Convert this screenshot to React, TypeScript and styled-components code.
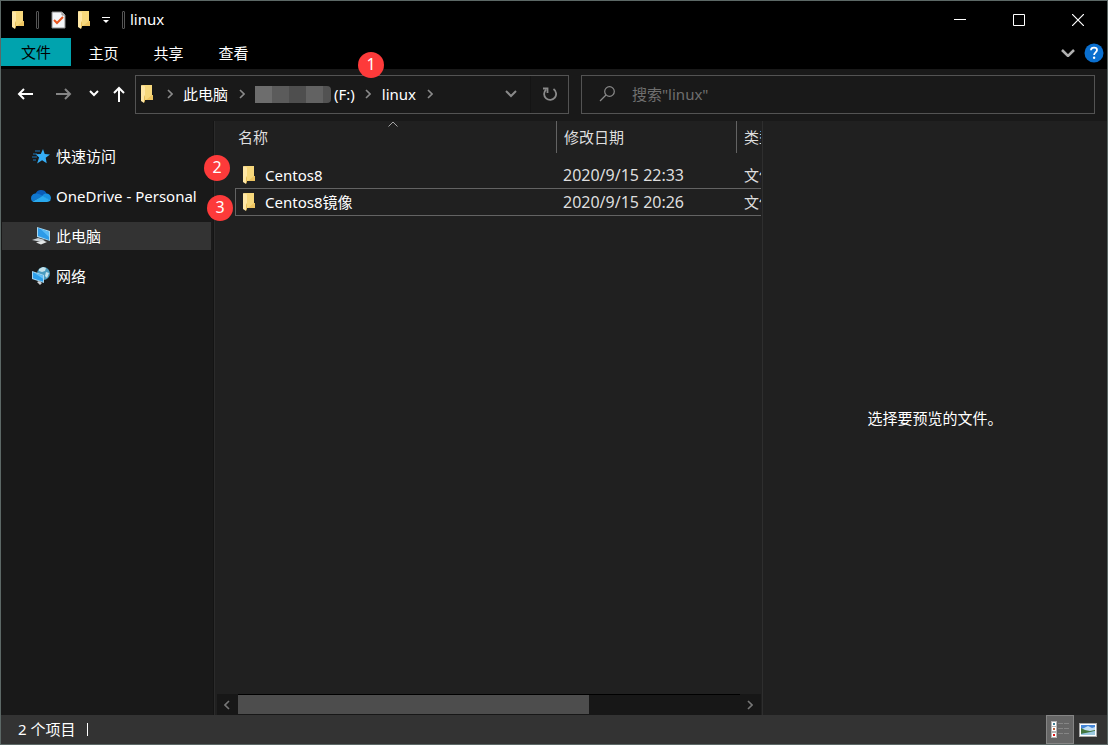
import React from "react";
import styled, { createGlobalStyle } from "styled-components";

const GlobalStyle = createGlobalStyle`
  *, *::before, *::after { box-sizing: border-box; }
  body { margin: 0; background: #000; }
  button, input { font: inherit; color: inherit; }
  body, button, input {
    font-family: "Noto Sans", "Noto Sans CJK SC", sans-serif;
    font-size: 15px;
    line-height: 20px;
  }
`;

const Window = styled.div`
  display: flex;
  flex-direction: column;
  min-height: 100vh;
  border: 1px solid #5c6866;
  background: #191919;
  color: #fff;
`;

const PlainButton = styled.button`
  display: flex;
  align-items: center;
  justify-content: center;
  flex: none;
  padding: 0;
  border: 0;
  background: none;
`;

const TitleBar = styled.header`
  display: flex;
  align-items: center;
  height: 37px;
  padding-left: 11px;
  background: #000;
`;

const QuickBar = styled.div`
  display: flex;
  align-items: center;
  gap: 12px;
`;

const Grip = styled.span`
  width: 3px;
  height: 18px;
  border: 1px solid #555;
  border-radius: 1px;
`;

const Title = styled.h1`
  flex: 1;
  margin: 0;
  padding: 0 0 2px 5px;
  font-size: 15px;
  font-weight: 400;
`;

const CaptionButton = styled(PlainButton)`
  width: 59px;
  height: 36px;
`;

const Ribbon = styled.nav`
  display: flex;
  align-items: flex-start;
  height: 31px;
  background: #000;
`;

const RibbonTab = styled(PlainButton)<{ $file?: boolean }>`
  width: ${(p) => (p.$file ? 70 : 65)}px;
  height: ${(p) => (p.$file ? 28 : 30)}px;
  background: ${(p) => (p.$file ? "#00a3ae" : "none")};
  color: ${(p) => (p.$file ? "#000" : "#fff")};
`;

const RibbonTools = styled.div`
  display: flex;
  align-items: center;
  gap: 9px;
  height: 30px;
  margin-left: auto;
  padding-right: 3px;
`;

const NavBar = styled.div`
  display: grid;
  grid-template-columns: 129px minmax(0, 434fr) minmax(0, 526fr);
  align-items: center;
  height: 52px;
  padding: 0 12px 2px 5px;
`;

const History = styled.div`
  display: flex;
  align-items: center;
`;

const HistoryButton = styled(PlainButton)<{ $width: number }>`
  width: ${(p) => p.$width}px;
  height: 38px;
`;

const AddressBar = styled.div`
  position: relative;
  display: flex;
  align-items: center;
  height: 39px;
  padding-left: 5px;
  border: 1px solid #535353;
`;

const Crumbs = styled.div`
  display: flex;
  align-items: center;
  flex: 1;
  min-width: 0;
  padding-left: 3px;
`;

const Crumb = styled.a`
  display: flex;
  align-items: center;
  gap: 3px;
  color: #fff;
  text-decoration: none;
  white-space: nowrap;
`;

const CrumbArrow = styled.span`
  display: flex;
  justify-content: center;
  width: 27px;
`;

const Mosaic = styled.span`
  display: grid;
  grid-template-columns: repeat(4, 17px) 8px;
  height: 17px;
  overflow: hidden;
  border-radius: 0 4px 4px 0;
`;

const Tile = styled.span<{ $shade: string }>`
  background: ${(p) => p.$shade};
`;

const AddressButton = styled(PlainButton)`
  width: 38px;
  height: 37px;
  & + & { border-left: 1px solid #141414; }
`;

const SearchBox = styled.label`
  display: flex;
  align-items: center;
  gap: 16px;
  height: 39px;
  margin-left: 12px;
  padding: 0 16px;
  border: 1px solid #535353;
`;

const SearchInput = styled.input`
  flex: 1;
  min-width: 0;
  padding: 0;
  border: 0;
  outline: 0;
  background: none;
  &::placeholder { color: #6f6f6f; opacity: 1; }
`;

const Main = styled.div`
  display: grid;
  grid-template-columns: 213px minmax(0, 549fr) minmax(0, 344fr);
  flex: 1;
`;

const Sidebar = styled.nav`
  display: flex;
  flex-direction: column;
  gap: 12px;
  padding: 21px 2px 0 1px;
  border-right: 1px solid #141414;
`;

const SideItem = styled.a<{ $selected?: boolean }>`
  display: flex;
  align-items: center;
  gap: 5px;
  height: 28px;
  padding-left: 29px;
  background: ${(p) => (p.$selected ? "#333" : "none")};
  color: #fff;
  text-decoration: none;
  white-space: nowrap;
`;

const FilePane = styled.main`
  display: flex;
  flex-direction: column;
  border-left: 1px solid #2b2b2b;
  border-right: 1px solid #2e2e2e;
  background: #202020;
`;

const FileArea = styled.div`
  flex: 1;
  padding: 0 1px 0 20px;
`;

const FileTable = styled.table`
  width: 100%;
  table-layout: fixed;
  border-collapse: separate;
  border-spacing: 0;
`;

const HeadCell = styled.th<{ $width?: number }>`
  position: relative;
  width: ${(p) => (p.$width ? `${p.$width}px` : "auto")};
  height: 40px;
  padding: 0;
  vertical-align: top;
  font-weight: 400;
  text-align: left;
  color: #dedede;
`;

const HeadLabel = styled.div<{ $first?: boolean }>`
  height: 32px;
  padding: 6px 0 6px ${(p) => (p.$first ? 3 : 7)}px;
  border-left: ${(p) => (p.$first ? 0 : 1)}px solid #636363;
  overflow: hidden;
  white-space: nowrap;
`;

const SortMark = styled.span`
  position: absolute;
  top: 0;
  left: 0;
  right: 5px;
  display: flex;
  justify-content: center;
`;

const Cell = styled.td<{ $focus?: boolean; $numeric?: boolean }>`
  height: ${(p) => (p.$focus ? 28 : 27)}px;
  padding: 0 0 0 ${(p) => (p.$numeric ? 7 : 8)}px;
  border: 0 solid #636363;
  border-width: ${(p) => (p.$focus ? "1px 0" : "0")};
  overflow: hidden;
  white-space: nowrap;
  text-overflow: clip;
  font-size: ${(p) => (p.$numeric ? 16 : 15)}px;
  color: #dedede;
`;

const NameCell = styled(Cell)`
  position: relative;
  padding-left: ${(p) => (p.$focus ? 7 : 8)}px;
  border-left-width: ${(p) => (p.$focus ? 1 : 0)}px;
  overflow: visible;
  color: #fff;
`;

const FileName = styled.span`
  display: flex;
  align-items: center;
  gap: 10px;
`;

const Badge = styled.span<{ $left: string; $top: string }>`
  position: absolute;
  left: ${(p) => p.$left};
  top: ${(p) => p.$top};
  width: 26px;
  height: 26px;
  border-radius: 50%;
  background: #fd3a3a;
  color: #fff;
  font-size: 16px;
  line-height: 24px;
  text-align: center;
`;

const ScrollBar = styled.div`
  display: flex;
  height: 21px;
  margin: 0 1px 0 2px;
  background: #171717;
`;

const ScrollButton = styled(PlainButton)`
  width: 21px;
  padding-right: 2px;
`;

const Track = styled.div`
  flex: 1;
  border-top: 1px solid #000;
`;

const Thumb = styled.div`
  width: 70%;
  height: 19px;
  background: #4d4d4d;
`;

const Preview = styled.aside`
  display: flex;
  align-items: center;
  justify-content: center;
  background: #202020;
`;

const StatusBar = styled.footer`
  display: flex;
  align-items: center;
  height: 29px;
  padding: 0 5px 0 17px;
  background: #333;
`;

const StatusText = styled.span`
  padding: 0 12px 2px 0;
`;

const StatusLine = styled.span`
  flex: none;
  width: 1px;
  height: 13px;
  margin-right: auto;
  background: #fff;
`;

const ViewButton = styled(PlainButton)<{ $on?: boolean }>`
  width: 28px;
  height: 29px;
  border: 1px solid ${(p) => (p.$on ? "#858585" : "transparent")};
  background: ${(p) => (p.$on ? "#666" : "none")};
`;

const FolderIcon = () => (
  <svg width="12" height="18" viewBox="0 0 12 18" aria-hidden="true">
    <path d="M1 0h10v10h1v5H3z" fill="#f7d87c" />
    <path d="M5 15l6-5h1v5z" fill="#eec561" />
    <path d="M0 0l4 1.500v8.500l-1 2v6l-3-2z" fill="#ffe7a5" />
    <path d="M3 12l1-2v6l-1 2z" fill="#e6be5a" />
  </svg>
);

const Chevron = ({ color = "#8a8a8a", flip = false }) => (
  <svg width="6" height="10" viewBox="0 0 6 10" fill="none" stroke={color} strokeWidth="1.6" aria-hidden="true">
    <path d={flip ? "M5 1L1 5l4 4" : "M1 1l4 4-4 4"} />
  </svg>
);

const ChevronDown = ({ width = 12, color = "#999", weight = 2 }) => (
  <svg width={width} height="8" viewBox={`0 0 ${width} 8`} fill="none" stroke={color} strokeWidth={weight} aria-hidden="true">
    <path d={`M1 1l${width / 2 - 1} ${width / 2 - 1} ${width / 2 - 1} -${width / 2 - 1}`} />
  </svg>
);

const Arrow = ({ color, forward = false }: { color: string; forward?: boolean }) => (
  <svg width="16" height="14" viewBox="0 0 16 14" fill="none" stroke={color} strokeWidth="2" aria-hidden="true">
    <path d={forward ? "M0 7h14M9 2l5 5-5 5" : "M16 7H2M7 2L2 7l5 5"} />
  </svg>
);

const StarIcon = () => (
  <svg width="20" height="20" viewBox="0 0 20 20" aria-hidden="true">
    <path d="M12 3l1.700 5 5.300.4-4.300 3.300 1 5.500-4.600-3-5 3.200 2-5.800L4.600 8.300l5.200-.2z" fill="#35adf5" />
    <path d="M4 5h5M2 8h4M1 11h5M2 14h3" stroke="#1b79be" />
  </svg>
);

const CloudIcon = () => (
  <svg width="20" height="14" viewBox="0 0 20 14" aria-hidden="true">
    <path d="M4.500 5A6 6 0 0 1 15.600 4.500L11 9z" fill="#0a5cb8" />
    <path d="M4.200 4.600C1.500 5 0 7 0 9.200c0 1.500.7 2.600 1.500 3.300L12 7C9 5 6.500 4 4.200 4.600z" fill="#1078d0" />
    <path d="M11 7.500c1-2.500 3-3.500 5-3 2.300.5 4 2.300 4 4.500 0 1-.3 1.800-.8 2.500z" fill="#1890df" />
    <path d="M1.500 12.500L11.500 7l8 4.300c-.8 1.200-2 1.700-3.500 1.700H4c-1 0-1.800-.1-2.500-.5z" fill="#29a9ee" />
  </svg>
);

const ComputerIcon = () => (
  <svg width="20" height="20" viewBox="0 0 20 20" aria-hidden="true">
    <path d="M6 1l13 4v10L6 11z" fill="#a9d7ef" />
    <path d="M7 2l11 4v8L7 10z" fill="#2d9be8" />
    <path d="M9 2.600L18 6v5z" fill="#59bbf6" />
    <path d="M1 14l6-2 7 2-4 2z" fill="#c9d0d4" />
    <path d="M5 16.500l7-2 4 1.500-6 2.500z" fill="#e4e7e8" />
  </svg>
);

const NetworkIcon = () => (
  <svg width="20" height="20" viewBox="0 0 20 20" aria-hidden="true">
    <circle cx="12.500" cy="7.500" r="6.500" fill="#4b9cc0" />
    <path d="M8 3l4-2 3 1-1 3-3 1-3-1zM15 6l3 1-2 5-2-2z" fill="#c5e2ea" />
    <path d="M1 5l12 4v8L1 13z" fill="#a6d6ef" />
    <path d="M2 6.300l10 3.400v6L2 12.200z" fill="#2d9fe9" />
    <path d="M3 6.700l9 3v3z" fill="#64c1f7" />
    <path d="M6 16l2-1 3 2-2 2z" fill="#d0d5d8" />
  </svg>
);

const files = [
  { name: "Centos8", date: "2020/9/15 22:33", focus: false, mark: 2, left: "-31px", top: "-6px" },
  { name: "Centos8镜像", date: "2020/9/15 20:26", focus: true, mark: 3, left: "-29px", top: "6px" },
];

const shades = ["#6d6d6d", "#5b5b5b", "#4e4e4e", "#626262", "#525252"];

export default function App() {
  return (
    <>
      <GlobalStyle />
      <Window>
        <TitleBar>
          <QuickBar>
            <FolderIcon />
            <Grip />
            <PlainButton aria-label="属性">
              <svg width="15" height="18" viewBox="0 0 15 18" aria-hidden="true">
                <path d="M1 1h10l3 3v13H1z" fill="#f4f6f8" stroke="#8d8d8d" />
                <path d="M11 1v3h3" fill="#ccc" stroke="#8d8d8d" />
                <path d="M3 9l3 3 6-6" fill="none" stroke="#e8541d" strokeWidth="2" />
              </svg>
            </PlainButton>
            <PlainButton aria-label="新建文件夹"><FolderIcon /></PlainButton>
            <PlainButton aria-label="自定义快速访问工具栏">
              <svg width="8" height="8" viewBox="0 0 8 8" aria-hidden="true">
                <path d="M0 1.500h8" stroke="#fff" />
                <path d="M1 4h6L4 7z" fill="#fff" />
              </svg>
            </PlainButton>
            <Grip />
          </QuickBar>
          <Title>linux</Title>
          <CaptionButton aria-label="最小化">
            <svg width="12" height="12" viewBox="0 0 12 12" aria-hidden="true"><path d="M0 5.500h12" stroke="#fff" /></svg>
          </CaptionButton>
          <CaptionButton aria-label="最大化">
            <svg width="12" height="12" viewBox="0 0 12 12" fill="none" aria-hidden="true"><path d="M.5.500h11v11H.5z" stroke="#fff" /></svg>
          </CaptionButton>
          <CaptionButton aria-label="关闭">
            <svg width="12" height="12" viewBox="0 0 12 12" aria-hidden="true"><path d="M0 0l12 12M12 0L0 12" stroke="#fff" strokeWidth="1.200" /></svg>
          </CaptionButton>
        </TitleBar>

        <Ribbon>
          <RibbonTab $file>文件</RibbonTab>
          <RibbonTab>主页</RibbonTab>
          <RibbonTab>共享</RibbonTab>
          <RibbonTab>查看</RibbonTab>
          <RibbonTools>
            <PlainButton aria-label="展开功能区"><ChevronDown width={14} color="#b0b0b0" weight={2.5} /></PlainButton>
            <PlainButton aria-label="帮助">
              <svg width="20" height="20" viewBox="0 0 20 20" fill="none" aria-hidden="true">
                <circle cx="10" cy="10" r="9.500" fill="#0a6fcf" />
                <path d="M7 7.200C7 3.800 13 4 13 7c0 2.200-2.900 2.500-2.900 5" stroke="#fff" strokeWidth="1.800" />
                <circle cx="10.100" cy="14.800" r="1.200" fill="#fff" />
              </svg>
            </PlainButton>
          </RibbonTools>
        </Ribbon>

        <NavBar>
          <History>
            <HistoryButton $width={38} aria-label="后退"><Arrow color="#fff" /></HistoryButton>
            <HistoryButton $width={40} aria-label="前进"><Arrow color="#858585" forward /></HistoryButton>
            <HistoryButton $width={20} aria-label="最近位置"><ChevronDown width={10} color="#fff" /></HistoryButton>
            <HistoryButton $width={30} aria-label="上移">
              <svg width="12" height="16" viewBox="0 0 12 16" fill="none" stroke="#fff" strokeWidth="2" aria-hidden="true">
                <path d="M6 16V2M1 7l5-5 5 5" />
              </svg>
            </HistoryButton>
          </History>
          <AddressBar>
            <FolderIcon />
            <Crumbs>
              <CrumbArrow><Chevron /></CrumbArrow>
              <Crumb href="#pc">此电脑</Crumb>
              <CrumbArrow><Chevron /></CrumbArrow>
              <Crumb href="#f">
                <Mosaic>{shades.map((s) => <Tile key={s} $shade={s} />)}</Mosaic>
                (F:)
              </Crumb>
              <CrumbArrow><Chevron /></CrumbArrow>
              <Crumb href="#linux">linux</Crumb>
              <CrumbArrow><Chevron /></CrumbArrow>
            </Crumbs>
            <AddressButton aria-label="以前的位置"><ChevronDown width={12} color="#8a8a8a" /></AddressButton>
            <AddressButton aria-label="刷新">
              <svg width="14" height="14" viewBox="0 0 14 14" fill="none" stroke="#8a8a8a" strokeWidth="1.800" aria-hidden="true">
                <path d="M10.500 2A6 6 0 1 1 3 2.600" />
                <path d="M0 1.500h4.500V6" />
              </svg>
            </AddressButton>
            <Badge $left="222px" $top="-24px">1</Badge>
          </AddressBar>
          <SearchBox>
            <svg width="18" height="16" viewBox="0 0 18 16" fill="none" stroke="#8a8a8a" strokeWidth="1.200" aria-hidden="true">
              <circle cx="11.500" cy="5.500" r="4.800" />
              <path d="M8 9l-6 6" />
            </svg>
            <SearchInput type="text" aria-label="搜索" placeholder={'搜索"linux"'} />
          </SearchBox>
        </NavBar>

        <Main>
          <Sidebar>
            <SideItem href="#quick"><StarIcon />快速访问</SideItem>
            <SideItem href="#onedrive"><CloudIcon />OneDrive - Personal</SideItem>
            <SideItem href="#pc" $selected><ComputerIcon />此电脑</SideItem>
            <SideItem href="#network"><NetworkIcon />网络</SideItem>
          </Sidebar>

          <FilePane>
            <FileArea>
              <FileTable>
                <thead>
                  <tr>
                    <HeadCell $width={321}>
                      <HeadLabel $first>名称</HeadLabel>
                      <SortMark>
                        <svg width="10" height="6" viewBox="0 0 10 6" fill="none" stroke="#a5a5a5" aria-hidden="true"><path d="M.5 5.500L5 1l4.500 4.500" /></svg>
                      </SortMark>
                    </HeadCell>
                    <HeadCell $width={180}><HeadLabel>修改日期</HeadLabel></HeadCell>
                    <HeadCell><HeadLabel>类型</HeadLabel></HeadCell>
                  </tr>
                </thead>
                <tbody>
                  {files.map((f) => (
                    <tr key={f.name}>
                      <NameCell $focus={f.focus}>
                        <FileName><FolderIcon />{f.name}</FileName>
                        <Badge $left={f.left} $top={f.top}>{f.mark}</Badge>
                      </NameCell>
                      <Cell $focus={f.focus} $numeric>{f.date}</Cell>
                      <Cell $focus={f.focus}>文件夹</Cell>
                    </tr>
                  ))}
                </tbody>
              </FileTable>
            </FileArea>
            <ScrollBar>
              <ScrollButton aria-label="向左滚动"><Chevron flip color="#777" /></ScrollButton>
              <Track><Thumb /></Track>
              <ScrollButton aria-label="向右滚动"><Chevron color="#777" /></ScrollButton>
            </ScrollBar>
          </FilePane>

          <Preview>选择要预览的文件。</Preview>
        </Main>

        <StatusBar>
          <StatusText>2 个项目</StatusText>
          <StatusLine />
          <ViewButton $on aria-label="详细信息">
            <svg width="18" height="17" viewBox="0 0 18 17" aria-hidden="true">
              <path d="M0 0h6v17H0z" fill="#b5b5b5" />
              <path d="M1 1h4v4H1zM1 6h4v4H1zM1 12h4v4H1z" fill="#fff" />
              <path d="M2 2h2v2H2z" fill="#3d7f96" />
              <path d="M2 7h2v2H2z" fill="#b5623f" />
              <path d="M2 13h2v2H2z" fill="#e01818" />
              <path d="M7 2.500h5M13 2.500h5M7 7.500h5M13 7.500h5M7 12.500h5M13 12.500h5" stroke="#858585" />
            </svg>
          </ViewButton>
          <ViewButton aria-label="大缩略图">
            <svg width="18" height="14" viewBox="0 0 18 14" aria-hidden="true">
              <path d="M0 0h18v14H0z" fill="#aaa" />
              <path d="M1 1h16v12H1z" fill="#fff" />
              <path d="M2 2h14v10H2z" fill="#4586d8" />
              <path d="M5 5l4-2 4 2 3-1v4H2V6z" fill="#c3e0f6" />
              <path d="M2 5l4 2 5 1 5-1v1l-7 2-7 1z" fill="#44773f" />
              <path d="M2 11l14-3v4H2z" fill="#9cc8df" />
            </svg>
          </ViewButton>
        </StatusBar>
      </Window>
    </>
  );
}
